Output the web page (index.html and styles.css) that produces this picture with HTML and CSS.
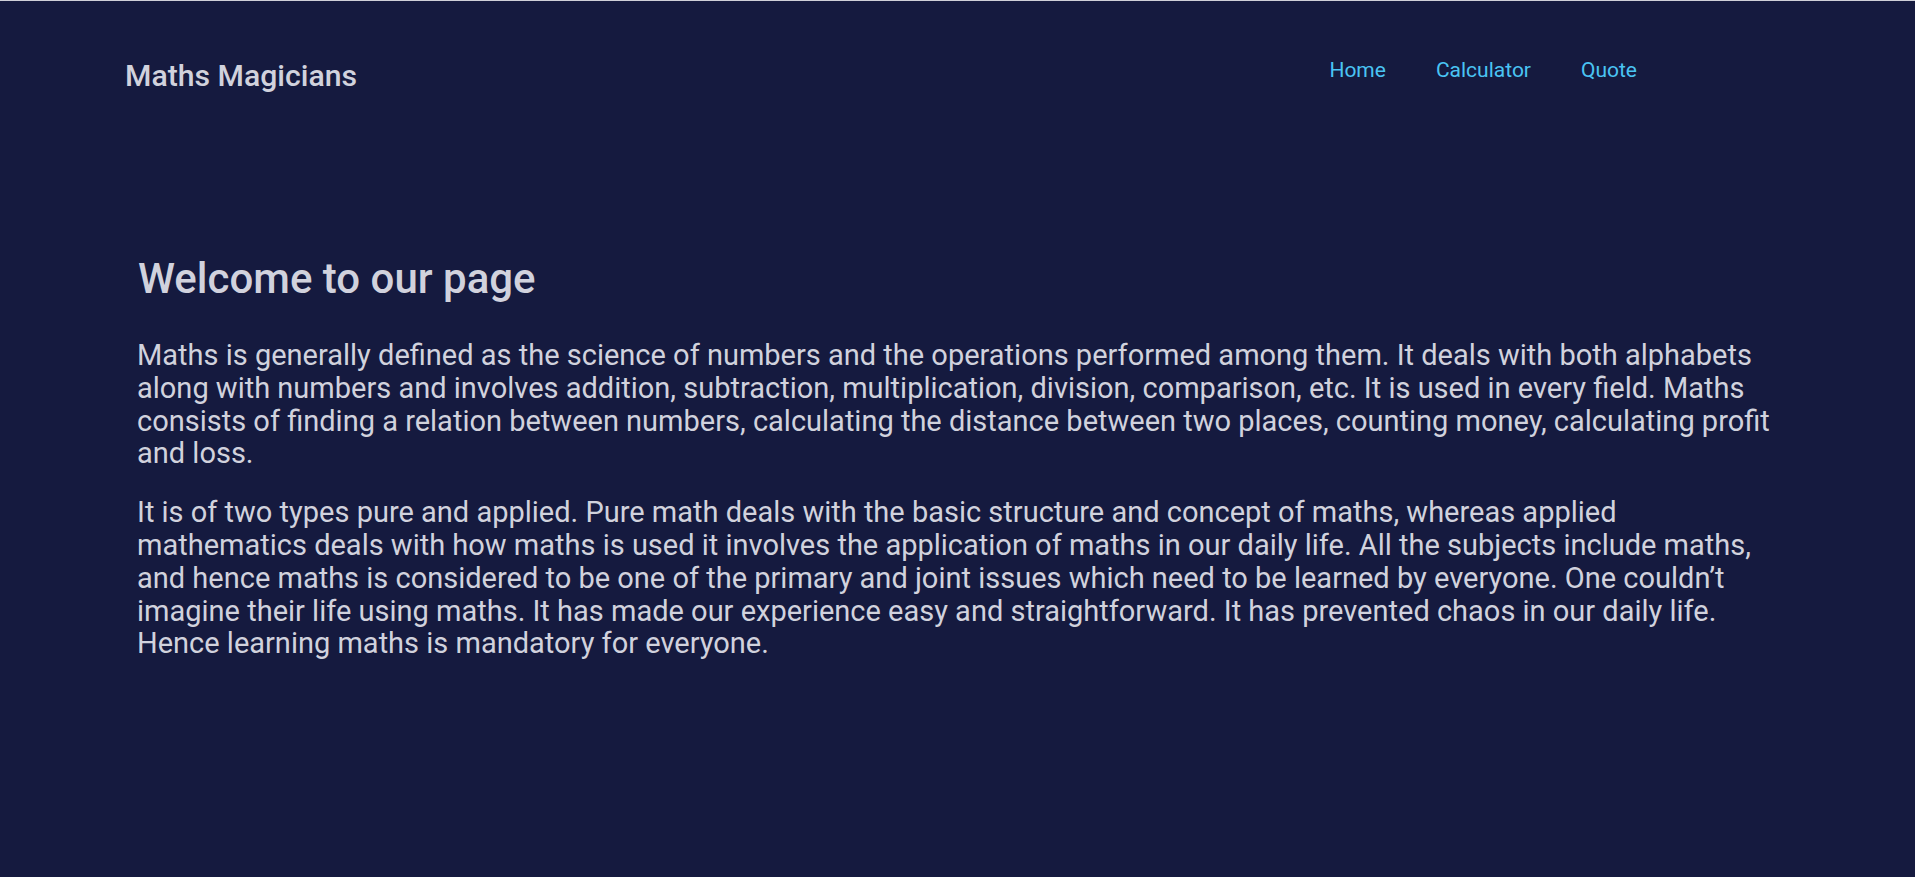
FILE: index.html
```html
<!DOCTYPE html>
<html lang="en">
<head>
<meta charset="utf-8">
<title>Maths Magicians</title>
<link rel="stylesheet" href="styles.css">
</head>
<body>
<header class="header">
  <h2 class="logo">Maths Magicians</h2>
  <nav class="nav">
    <a class="nav-link" href="#">Home</a>
    <a class="nav-link" href="#">Calculator</a>
    <a class="nav-link" href="#">Quote</a>
  </nav>
</header>
<main class="home">
  <h1 class="home-title">Welcome to our page</h1>
  <p class="home-text">Maths is generally defined as the science of numbers and the operations performed among them. It deals with both alphabets along with numbers and involves addition, subtraction, multiplication, division, comparison, etc. It is used in every field. Maths consists of finding a relation between numbers, calculating the distance between two places, counting money, calculating profit and loss.</p>
  <p class="home-text">It is of two types pure and applied. Pure math deals with the basic structure and concept of maths, whereas applied mathematics deals with how maths is used it involves the application of maths in our daily life. All the subjects include maths, and hence maths is considered to be one of the primary and joint issues which need to be learned by everyone. One couldn’t imagine their life using maths. It has made our experience easy and straightforward. It has prevented chaos in our daily life. Hence learning maths is mandatory for everyone.</p>
</main>
</body>
</html>
```
FILE: styles.css
```css
html, body {
  margin: 0;
  padding: 0;
}

body {
  min-height: 876px;
  background: #151a3f;
  border-top: 1px solid #cfd0d8;
  color: #d1d2dd;
  font-family: Roboto, "Open Sans", sans-serif;
}

.header {
  display: flex;
  justify-content: space-between;
  align-items: flex-start;
  padding: 56px 278px 0 125px;
}

.logo {
  margin: 1px 0 0;
  font-size: 30.2px;
  line-height: 36px;
  font-weight: 500;
  color: #d1d2dd;
}

.nav {
  display: flex;
  gap: 50px;
  padding-top: 1px;
}

.nav-link {
  font-size: 21px;
  line-height: 25px;
  color: #4ac4f3;
  text-decoration: none;
}

.home {
  padding: 160px 135px 0 137px;
}

.home-title {
  margin: 0 0 35px 1px;
  font-size: 42px;
  line-height: 50px;
  font-weight: 500;
  color: #d1d2dd;
}

.home-text {
  margin: 0 0 26px;
  font-size: 29px;
  line-height: 32.8px;
}
```
